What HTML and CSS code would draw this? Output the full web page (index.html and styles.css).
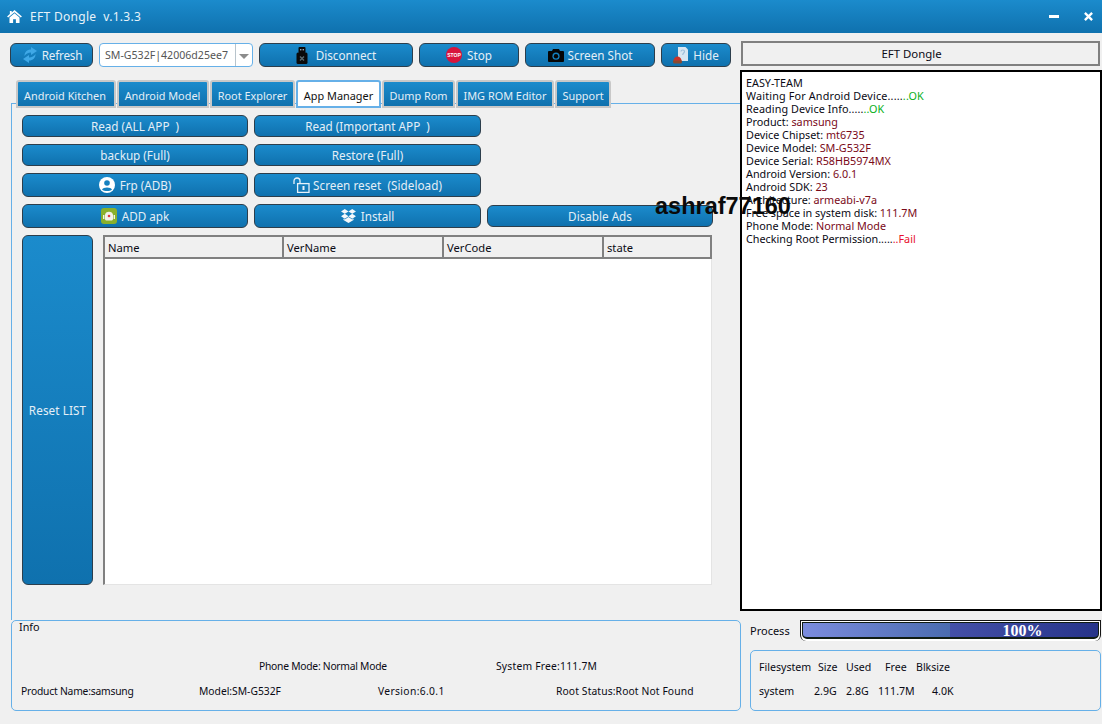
FILE: index.html
```html
<!DOCTYPE html>
<html lang="en">
<head>
<meta charset="utf-8">
<title>EFT Dongle</title>
<link rel="stylesheet" href="styles.css">
</head>
<body>
<div class="app">
  <header class="titlebar">
    <svg class="home-ico" viewBox="0 0 16 14" width="15" height="13"><path fill="#fff" d="M8 0 L16 7 L14.8 8.2 L8 2.4 L1.2 8.2 L0 7 L3 4.4 V1 H5 V2.7 Z M2.6 8.2 L8 3.6 L13.4 8.2 V14 H9.5 V10 H6.5 V14 H2.6 Z"/></svg>
    <span class="app-title">EFT Dongle&nbsp; v.1.3.3</span>
    <span class="win-ctl">
      <svg viewBox="0 0 10 4" width="10" height="4"><rect width="10" height="3" fill="#fff"/></svg>
      <svg class="win-x" viewBox="0 0 10 10" width="9" height="9"><path stroke="#fff" stroke-width="2.6" d="M1 1 L9 9 M9 1 L1 9"/></svg>
    </span>
  </header>
  <div class="body">
    <main class="left">
      <div class="toolbar">
        <button class="btn t-refresh"><svg viewBox="0 0 16 16" width="16" height="16"><path fill="#3fa8e6" d="M9 0 L15 4 L9 8 L9 5.5 C6 5.5 4 7 2.5 9 C2.5 5 5 2.5 9 2.5 Z M7 16 L1 12 L7 8 L7 10.5 C10 10.5 12 9 13.5 7 C13.5 11 11 13.5 7 13.5 Z"/></svg>Refresh</button>
        <div class="combo"><span class="combo-text">SM-G532F|42006d25ee7</span><span class="combo-arrow"><i></i></span></div>
        <button class="btn t-disc"><svg viewBox="0 0 12 17" width="12" height="17"><rect x="2.5" y="0" width="7" height="6" rx="1" fill="#0a0a0a"/><rect x="4" y="2" width="1.4" height="1.4" fill="#9ab"/><rect x="6.6" y="2" width="1.4" height="1.4" fill="#9ab"/><rect x="0.5" y="5.5" width="11" height="11.5" rx="1.5" fill="#0a0a0a"/><path d="M4 9.5 L8 13.5 M8 9.5 L4 13.5" stroke="#5a6a70" stroke-width="1.4"/></svg>Disconnect</button>
        <button class="btn t-stop"><svg viewBox="0 0 16 16" width="16" height="16"><circle cx="8" cy="8" r="8" fill="#d8143c"/><text x="8" y="10" class="stop-txt" text-anchor="middle">STOP</text></svg>Stop</button>
        <button class="btn t-shot"><svg viewBox="0 0 16 13" width="16" height="13"><path fill="#050505" d="M5 0 H11 L12 2 H15 Q16 2 16 3 V12 Q16 13 15 13 H1 Q0 13 0 12 V3 Q0 2 1 2 H4 Z"/><circle cx="8" cy="7.2" r="3.6" fill="#1480bf"/><circle cx="8" cy="7.2" r="2.2" fill="#050505"/></svg>Screen Shot</button>
        <button class="btn t-hide"><svg viewBox="0 0 15 17" width="15" height="17"><path fill="#d8e6f2" d="M5 0 H12.5 L15 2.5 V14 H5 Z"/><path fill="none" stroke="#9fc0dc" stroke-width="1.2" d="M8 4.5 C8 2.5 11.5 2.5 11.5 4.5 C11.5 6 9.7 6 9.7 8"/><path fill="#c8342a" d="M0.5 14 C0.5 8 8.5 8 8.5 14 Z"/><path fill="#8a4a30" d="M0 13.5 H9 V15 Q9 16.5 7 16.5 H2 Q0 16.5 0 15 Z"/></svg>Hide</button>
      </div>

      <div class="tabs">
        <div class="tab w1">Android Kitchen</div>
        <div class="tab w2">Android Model</div>
        <div class="tab w3">Root Explorer</div>
        <div class="tab tab-active w4">App Manager</div>
        <div class="tab w5">Dump Rom</div>
        <div class="tab w6">IMG ROM Editor</div>
        <div class="tab w7">Support</div>
      </div>

      <section class="pane">
        <div class="btn-row"><button class="btn a1">Read (ALL APP&nbsp; )</button><button class="btn a2">Read (Important APP&nbsp; )</button></div>
        <div class="btn-row"><button class="btn a1">backup (Full)</button><button class="btn a2">Restore (Full)</button></div>
        <div class="btn-row tall"><button class="btn a1"><svg viewBox="0 0 16 16" width="16" height="16"><circle cx="8" cy="8" r="8" fill="#fff"/><circle cx="8" cy="6" r="2.8" fill="#1480bf"/><path d="M3 12.5 C4 9.8 12 9.8 13 12.5 C11 14.6 5 14.6 3 12.5 Z" fill="#1480bf"/></svg>Frp (ADB)</button><button class="btn a2 unlock"><svg viewBox="0 0 17 16" width="17" height="16"><path fill="none" stroke="#e8f2fa" stroke-width="1.3" d="M1 7 V4 C1 0 7 0 7 4 V6"/><rect x="4.6" y="6.6" width="11.4" height="8.8" fill="none" stroke="#e8f2fa" stroke-width="1.3"/><rect x="9.5" y="9" width="2" height="4" fill="#e8f2fa"/></svg>Screen reset&nbsp; (Sideload)</button></div>
        <div class="btn-row tall"><button class="btn a1"><svg viewBox="0 0 16 16" width="16" height="16"><rect width="16" height="16" rx="3" fill="#8ab02c"/><path d="M4 7 C4 2.5 12 2.5 12 7 V11 C12 12 11 12.5 10 12.5 H6 C5 12.5 4 12 4 11 Z" fill="#f2f2ea"/><rect x="2" y="7" width="1.4" height="4" fill="#f2f2ea"/><rect x="12.6" y="7" width="1.4" height="4" fill="#f2f2ea"/><circle cx="8" cy="8" r="1.3" fill="#e03c3c"/></svg>ADD apk</button><button class="btn a2"><svg viewBox="0 0 16 15" width="15" height="14"><path fill="#f4f8fb" d="M4 0 L8 2.6 L4 5.2 L0 2.6 Z M12 0 L16 2.6 L12 5.2 L8 2.6 Z M4 5.2 L8 7.8 L4 10.4 L0 7.8 Z M12 5.2 L16 7.8 L12 10.4 L8 7.8 Z M8 8.6 L12 11.2 L13.4 10.3 V11.8 L8 15 L2.6 11.8 V10.3 L4 11.2 Z"/></svg>Install</button><button class="btn a1 ads">Disable Ads</button></div>

        <div class="list-row">
          <button class="btn reset">Reset LIST</button>
          <div class="table">
            <div class="thead">
              <div class="th c1">Name</div>
              <div class="th c2">VerName</div>
              <div class="th c3">VerCode</div>
              <div class="th c4">state</div>
            </div>
          </div>
        </div>
        <div class="stamp">ashraf77160</div>
      </section>

      <section class="info">
        <div class="info-title">Info</div>
        <div class="info-row r1"><span class="i-phone">Phone Mode: Normal Mode</span><span class="i-free">System Free:111.7M</span></div>
        <div class="info-row r2"><span class="i-prod">Product Name:samsung</span><span class="i-model">Model:SM-G532F</span><span class="i-ver">Version:6.0.1</span><span class="i-root">Root Status:Root Not Found</span></div>
      </section>
    </main>

    <aside class="right">
      <div class="log-head">EFT Dongle</div>
      <div class="log">
        <div>EASY-TEAM</div>
        <div class="wide">Waiting For Android Device.....<span class="ok">..OK</span></div>
        <div class="wide2">Reading Device Info.....<span class="ok">..OK</span></div>
        <div>Product: <span class="val">samsung</span></div>
        <div>Device Chipset: <span class="val">mt6735</span></div>
        <div>Device Model: <span class="val">SM-G532F</span></div>
        <div>Device Serial: <span class="val">R58HB5974MX</span></div>
        <div>Android Version: <span class="val">6.0.1</span></div>
        <div>Android SDK: <span class="val">23</span></div>
        <div>Architecture: <span class="val">armeabi-v7a</span></div>
        <div>Free space in system disk: <span class="val">111.7M</span></div>
        <div>Phone Mode: <span class="val">Normal Mode</span></div>
        <div>Checking Root Permission.....<span class="fail">..Fail</span></div>
      </div>
      <div class="proc-row">
        <span class="proc-label">Process</span>
        <div class="progress"><div class="bar"><span>100%</span></div></div>
      </div>
      <div class="fs">
        <div class="fs-row"><span class="f1">Filesystem</span><span class="f2">Size</span><span class="f3">Used</span><span class="f4">Free</span><span>Blksize</span></div>
        <div class="fs-row"><span class="g1">system</span><span class="g2">2.9G</span><span class="g3">2.8G</span><span class="g4">111.7M</span><span>4.0K</span></div>
      </div>
    </aside>
  </div>
</div>
</body>
</html>
```
FILE: styles.css
```css
* { box-sizing: border-box; }
html, body { margin: 0; padding: 0; }
body { width: 1102px; height: 724px; overflow: hidden; background: #f0f0f0; font-family: "Noto Sans", "DejaVu Sans", sans-serif; font-size: 11.5px; color: #0a0a14; }
.app { display: flex; flex-direction: column; height: 724px; }
.titlebar { height: 33px; flex: none; display: flex; align-items: center; padding: 0 9px 0 7px; color: #e8f3fa; background: linear-gradient(#1b8bcc, #0f71ae); font-size: 12px; }
.home-ico { margin-right: 8px; }
.app-title { letter-spacing: .3px; }
.win-ctl { margin-left: auto; display: flex; align-items: center; gap: 25px; }
.body { flex: 1; display: flex; }
.left { width: 740px; flex: none; position: relative; }
.right { width: 362px; flex: none; padding: 8px 0 0 0; }

.btn { display: flex; align-items: center; justify-content: center; gap: 5px; border: 1px solid #2c3e4c; border-radius: 6px; padding: 0; background: linear-gradient(#1b8bcc, #0f71ae); color: #e4eff7; font: inherit; font-size: 11.7px; }
.toolbar { display: flex; gap: 6px; padding: 10px 0 0 10px; height: 34px; }
.t-refresh { width: 83px; letter-spacing: -.2px; padding-left: 1px; gap: 4px; }
.t-disc { width: 154px; gap: 8px; }
.t-stop { width: 100px; }
.t-shot { width: 130px; gap: 4px; }
.t-hide { width: 70px; gap: 5px; }
.stop-txt { font-family: "Liberation Sans", sans-serif; font-size: 5px; font-weight: bold; fill: #fff; }
.combo { width: 154px; display: flex; border: 1px solid #66b0e8; border-radius: 4px; background: #fff; color: #555; }
.combo-text { flex: 1; padding-left: 5px; line-height: 22px; font-size: 10.6px; white-space: nowrap; }
.combo-arrow { width: 17px; border-left: 1px solid #b8c4cc; display: flex; align-items: center; justify-content: center; }
.combo-arrow i { width: 0; height: 0; border-left: 5px solid transparent; border-right: 5px solid transparent; border-top: 5px solid #8c8c8c; margin-top: 2px; }

.tabs { display: flex; gap: 1px; align-items: flex-end; height: 28px; margin-top: 13px; padding-left: 16px; position: relative; z-index: 1; }
.tab { height: 28px; padding-top: 2px; display: flex; align-items: center; justify-content: center; border: 2px solid #c8c8c8; border-radius: 3px 3px 0 0; background: linear-gradient(#1b8bcc, #0f71ae); color: #e4eff7; font-size: 10.9px; white-space: nowrap; }
.tab-active { background: #fff; color: #111; border-color: #66b0e8; }
.w1 { width: 100px; padding-right: 2px; } .w2 { width: 92px; padding-right: 1px; } .w3 { width: 85px; } .w4 { width: 85px; } .w5 { width: 73px; } .w6 { width: 98px; } .w7 { width: 56px; }

.pane { position: relative; margin: -5px 0 0 11px; height: 517px; border-top: 1px solid #66b0e8; border-left: 1px solid #66b0e8; padding: 11px 0 0 10px; }
.btn-row { display: flex; gap: 6px; height: 22px; margin-bottom: 7px; }
.btn-row.tall { height: 24px; }
.a1 { width: 226px; flex: none; }
.a2 { width: 227px; flex: none; }
.unlock { gap: 3px; letter-spacing: .05px; }
.ads { height: 22px; margin-top: 1px; }
.list-row { display: flex; gap: 10px; height: 350px; }
.reset { width: 71px; flex: none; letter-spacing: .1px; }
.table { width: 609px; background: #fff; border-left: 2px solid #808080; border-right: 1px solid #e4e4e4; border-bottom: 1px solid #e4e4e4; }
.thead { display: flex; height: 24px; background: #f0f0f0; border: 2px solid #808080; border-left: 0; margin-right: -1px; }
.th { border-right: 2px solid #808080; padding-left: 3px; line-height: 21px; font-size: 11.2px; }
.th:last-child { border-right: 0; }
.c1 { width: 179px; } .c2 { width: 160px; } .c3 { width: 160px; } .c4 { flex: 1; }
.stamp { position: absolute; left: 643px; top: 89px; font: bold 23.5px "Liberation Sans", Arial, sans-serif; color: #0a0a0a; white-space: nowrap; line-height: 27px; }

.info { margin-left: 11px; width: 730px; height: 91px; border: 1px solid #66b0e8; border-radius: 5px; padding: 0 6px 0 7px; position: relative; font-size: 10.3px; }
.info-title { line-height: 12px; font-size: 10.8px; }
.info-row { display: flex; white-space: nowrap; line-height: 16px; }
.r1 { margin-top: 25px; padding-left: 240px; }
.r2 { margin-top: 9px; padding-left: 2px; }
.i-phone { width: 237px; letter-spacing: -.25px; }
.i-free { letter-spacing: .22px; }
.i-prod { width: 178px; letter-spacing: -.2px; }
.i-model { width: 179px; }
.i-ver { width: 178px; letter-spacing: .35px; }
.i-root { letter-spacing: .12px; }

.log-head { margin-left: 1px; width: 359px; height: 25px; border: 2px solid #808080; text-align: center; line-height: 22px; font-size: 11.4px; padding-right: 18px; }
.log { margin-top: 4px; width: 362px; height: 541px; background: #fff; border: 2px solid #000; padding: 4px 0 0 4px; line-height: 13px; font-size: 10.8px; white-space: nowrap; }
.wide { letter-spacing: .16px; }
.wide2 { letter-spacing: .08px; }
.ok { color: #08b020; }
.val { color: #7a0a18; }
.fail { color: #e8102c; }
.proc-row { display: flex; align-items: center; padding-left: 10px; margin-top: 9px; height: 21px; }
.proc-label { width: 50px; font-size: 11px; }
.progress { width: 301px; height: 21px; border: 1px solid #141414; border-bottom: 0; border-radius: 0 0 6px 6px; padding: 1px 1px 2px; background: #fff; }
.bar { height: 17px; border: 1px solid #101c14; border-bottom-width: 2px; border-radius: 0 0 5px 5px; background: linear-gradient(90deg, #7b8cde 0%, #4a6cb0 50%, #4450a8 50%, #26348a 100%); text-align: center; color: #fff; font: bold 16px/15px "Liberation Serif", serif; }
.bar span { position: relative; left: 72px; }
.fs { margin: 9px 0 0 10px; width: 351px; height: 61px; border: 1px solid #66b0e8; border-radius: 5px; padding: 9px 0 0 8px; }
.fs-row { display: flex; white-space: nowrap; line-height: 14px; margin-bottom: 10px; font-size: 10.6px; }
.f1 { width: 59px; } .f2 { width: 28px; } .f3 { width: 39px; } .f4 { width: 31px; }
.g1 { width: 55px; } .g2 { width: 32px; } .g3 { width: 32px; } .g4 { width: 54px; }
```
